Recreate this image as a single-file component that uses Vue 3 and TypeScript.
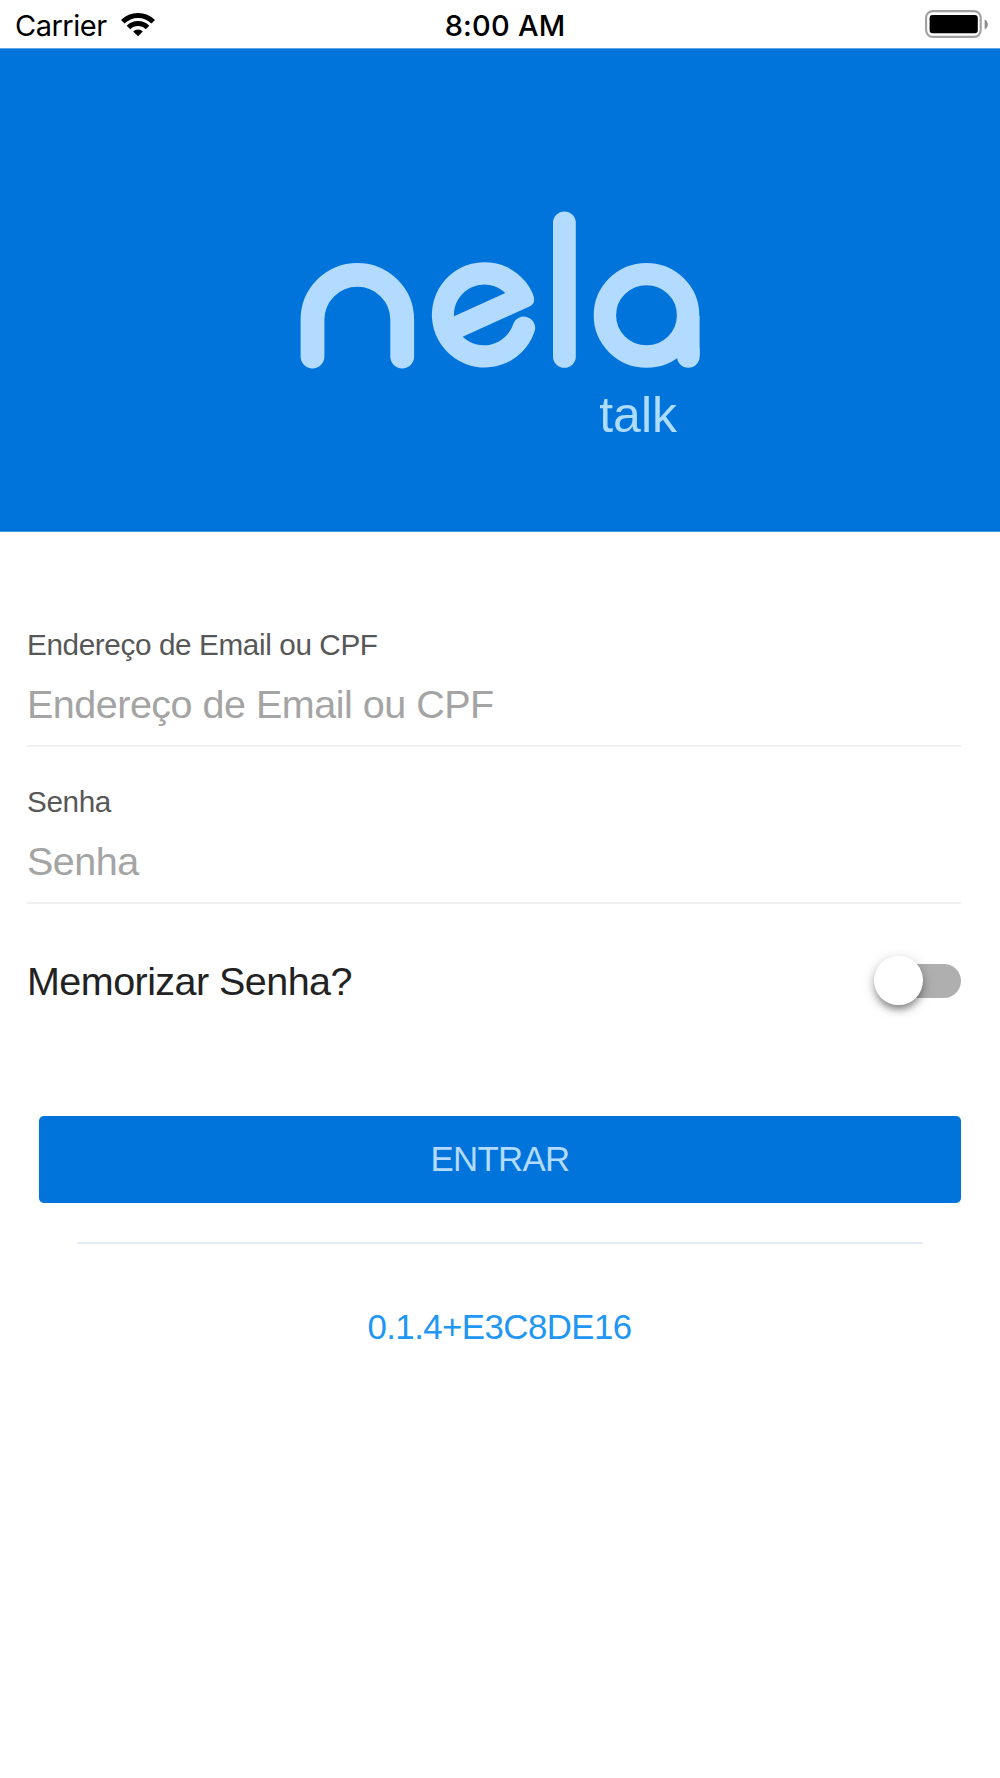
<script setup lang="ts">
import { ref } from 'vue'

interface Field {
  id: string
  label: string
  type: string
}

const fields: Field[] = [
  { id: 'login', label: 'Endereço de Email ou CPF', type: 'text' },
  { id: 'password', label: 'Senha', type: 'password' },
]
const values = ref<Record<string, string>>({ login: '', password: '' })
const remember = ref(false)
const version = '0.1.4+E3C8DE16'
</script>

<template>
  <div class="screen">
    <header class="status">
      <div class="carrier">
        <span class="carrier-name">Carrier</span>
        <svg class="wifi" width="36" height="26" viewBox="0 0 108 78" aria-hidden="true">
          <g fill="none" stroke="#000" stroke-width="15">
            <path d="M8.3 32.5A64.5 64.5 0 0 1 99.7 32.5" />
            <path d="M25.5 49.5A40.5 40.5 0 0 1 82.5 49.5" />
          </g>
          <path d="M39.5 61.5A21 21 0 0 1 68.5 61.5L54 76Z" />
        </svg>
      </div>
      <time class="time">8:00 AM</time>
      <svg class="battery" width="64" height="28" viewBox="0 0 64 28" aria-hidden="true">
        <rect x="1.1" y="1.1" width="54.6" height="25.8" rx="6.6" fill="none" stroke="#a0a0a0" stroke-width="2.1" />
        <rect x="4.6" y="5" width="48.2" height="18.3" rx="3" />
        <path d="M59.6 9.4C63.9 11 63.9 17.6 59.6 19.2Z" fill="#8d8d8d" />
      </svg>
    </header>

    <section class="hero">
      <div class="brand">
        <svg class="logo" width="400" height="158" viewBox="300 211 400 158" role="img" aria-label="nela">
          <g fill="none" stroke="#b3daff" stroke-linecap="round">
            <path d="M312.5 356.6V319.7A44.8 44.8 0 0 1 402.2 319.7V356.6" stroke-width="23.8" />
            <path d="M564.4 222.8V356.4" stroke-width="22.8" />
            <ellipse cx="646.5" cy="315.3" rx="41.6" ry="41.2" stroke-width="22.4" />
            <path d="M688.3 316V356.4" stroke-width="22.6" stroke-linecap="butt" />
            <path d="M688.3 350V356.4" stroke-width="22.6" />
          </g>
          <path
            transform="translate(280 200.3) scale(.33333)"
            fill="#b3daff"
            fill-rule="evenodd"
            d="M756 275A158 158 0 1 0 762 398A34 34 0 1 0 699 373A92 92 0 0 1 548 409L750 318Q765 310 762 292Q760 284 756 275ZM522 348A91 91 0 0 1 676 278Z"
          />
        </svg>
        <span class="product">talk</span>
      </div>
    </section>

    <form class="form" @submit.prevent>
      <div v-for="field in fields" :key="field.id" class="field">
        <label :for="field.id">{{ field.label }}</label>
        <input :id="field.id" v-model="values[field.id]" :type="field.type" :placeholder="field.label" />
      </div>

      <div class="remember">
        <span class="remember-label">Memorizar Senha?</span>
        <button
          type="button"
          class="toggle"
          :class="{ on: remember }"
          role="switch"
          :aria-checked="remember"
          aria-label="Memorizar Senha?"
          @click="remember = !remember"
        >
          <i class="knob"></i>
        </button>
      </div>

      <button class="submit" type="submit">ENTRAR</button>
      <hr />
      <p class="version">{{ version }}</p>
    </form>
  </div>
</template>

<style>
body {
  margin: 0;
  background: #fff;
}
</style>

<style scoped>
.screen {
  width: 1000px;
  height: 1778px;
  overflow: hidden;
  background: #fff;
  font-family: 'Liberation Sans', Arial, sans-serif;
  display: flex;
  flex-direction: column;
}
.status {
  height: 48px;
  flex: none;
  display: grid;
  grid-template-columns: 1fr auto 1fr;
  align-items: start;
  box-sizing: border-box;
  padding: 0 11px 0 15px;
  font-family: Inter, sans-serif;
  font-size: 29px;
  line-height: 52px;
  color: #000;
}
.carrier {
  display: flex;
  gap: 13px;
}
.carrier-name {
  letter-spacing: -0.5px;
}
.wifi {
  margin-top: 10.5px;
}
.time {
  font-weight: 500;
  padding-left: 6px;
  letter-spacing: 0.2px;
}
.battery {
  justify-self: end;
  margin-top: 10px;
}
.hero {
  height: 484px;
  flex: none;
  box-sizing: border-box;
  border-top: 1px solid #58a4e7;
  border-bottom: 1px solid #4199e4;
  background: #0074db;
  display: flex;
  justify-content: center;
}
.brand {
  width: 400px;
  padding-top: 162px;
  display: flex;
  flex-direction: column;
}
.product {
  align-self: flex-end;
  margin: 17px 23px 0 0;
  font-size: 50px;
  line-height: 58px;
  color: #addcff;
}
.form {
  display: flex;
  flex-direction: column;
  padding: 92.7px 39px 0 27px;
}
.field {
  display: flex;
  flex-direction: column;
  margin-bottom: 35px;
}
.field label {
  font-size: 29.7px;
  line-height: 40px;
  letter-spacing: -0.38px;
  color: #575757;
}
.field input {
  height: 80px;
  padding: 0;
  border: 0;
  border-bottom: 2px solid #f0f0f0;
  box-sizing: content-box;
  outline: 0;
  background: transparent;
  font: 39.5px 'Liberation Sans', Arial, sans-serif;
  letter-spacing: -0.5px;
  color: #222;
}
.field input::placeholder {
  color: #a4a4a4;
  opacity: 1;
}
.remember {
  display: flex;
  align-items: center;
  justify-content: space-between;
  height: 50px;
  margin-top: 17px;
  font-size: 39.5px;
  letter-spacing: -0.55px;
  color: #222;
}
.remember-label {
  padding-top: 2px;
}
.toggle {
  display: flex;
  align-items: center;
  width: 87px;
  height: 34px;
  padding: 0;
  border: 0;
  border-radius: 17px;
  background: linear-gradient(#afafaf, #afafaf) right / 70px 100% no-repeat;
}
.knob {
  width: 48.6px;
  height: 48.6px;
  flex: none;
  border-radius: 50%;
  background: #fff;
  box-shadow: 0 8px 6px -5px rgba(0, 0, 0, 0.2), 0 5px 7px rgba(0, 0, 0, 0.24), 0 3px 14px rgba(0, 0, 0, 0.18);
}
.toggle.on {
  justify-content: flex-end;
}
.submit {
  height: 87px;
  margin: 110px 0 0 12px;
  padding: 0;
  border: 0;
  border-radius: 5px;
  background: #0074db;
  font: 34.8px 'Liberation Sans', Arial, sans-serif;
  letter-spacing: -0.65px;
  color: #b3daff;
}
hr {
  align-self: stretch;
  height: 2px;
  margin: 39px 38px 0 50px;
  border: 0;
  background: #e4eaf6;
}
.version {
  margin: 63.5px 0 0 11px;
  text-align: center;
  font-size: 34.8px;
  line-height: 40px;
  letter-spacing: -0.55px;
  color: #2196f3;
}
</style>
